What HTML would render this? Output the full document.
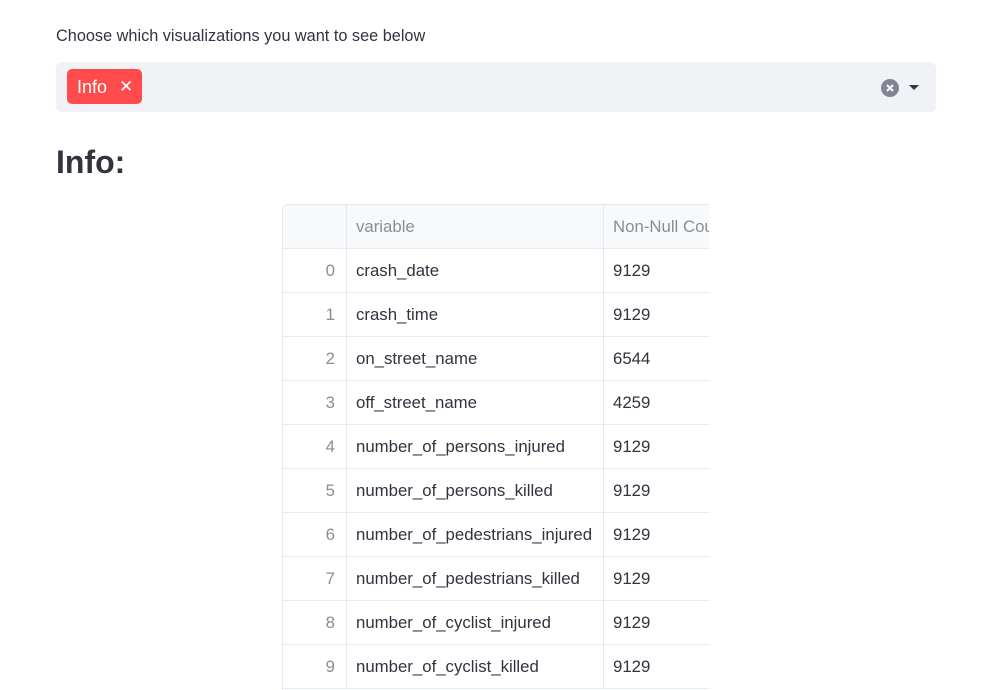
<!DOCTYPE html>
<html><head><style>
html,body{margin:0;padding:0;background:#fff;width:1000px;height:690px;overflow:hidden;font-family:"Liberation Sans",sans-serif;color:#31333f}
.lbl{position:absolute;left:56px;top:27px;font-size:16.3px;color:#31333f}
.sel{position:absolute;left:56px;top:62px;width:880px;height:50px;background:#f0f2f6;border-radius:6px}
.tag{position:absolute;left:11px;top:7px;width:75px;height:35px;background:#ff4b4b;border-radius:5px;color:#fff;font-size:18px;line-height:36px}
.tag span{position:absolute;left:10px}
.tag b{position:absolute;left:52px;font-weight:normal;font-size:17px}
.clr{position:absolute;left:825px;top:17px;width:18px;height:18px;border-radius:50%;background:#808495}
.arr{position:absolute;left:853px;top:23px;width:0;height:0;border-left:5px solid transparent;border-right:5px solid transparent;border-top:5px solid #31333f}
h1{position:absolute;left:56px;top:144px;margin:0;font-size:32px;font-weight:bold;color:#31333f}
.tbl{position:absolute;left:282px;top:204px;width:426px;height:485px;border:1px solid #e6e9ef;border-right:none;border-bottom:none;border-radius:6px 0 0 0;overflow:hidden;font-size:16.8px}
.r{position:absolute;left:0;width:426px;height:43px;border-bottom:1px solid #e6e9ef}
.r div{position:absolute;top:0;height:44px;line-height:44px}
.i{left:0;width:52px;text-align:right;color:#8b8d96}
.v{left:63px;border-left:1px solid #e6e9ef;padding-left:9px;width:247px}
.c{left:320px;border-left:1px solid #e6e9ef;padding-left:9px;white-space:nowrap}
.h{background:#f8f9fb;color:#8b8d96}
.h .v,.h .c{color:#8b8d96}
</style></head><body>
<div class="lbl">Choose which visualizations you want to see below</div>
<div class="sel"><div class="tag"><span>Info</span><b>✕</b></div>
<div class="clr"><svg width="18" height="18"><path d="M6 6L12 12M12 6L6 12" stroke="#fff" stroke-width="2"/></svg></div><div class="arr"></div></div>
<h1>Info:</h1>
<div class="tbl">
<div class="r h" style="top:0"><div class="i"></div><div class="v">variable</div><div class="c">Non-Null Cou</div></div>
<div class="r" style="top:44px"><div class="i">0</div><div class="v">crash_date</div><div class="c">9129</div></div>
<div class="r" style="top:88px"><div class="i">1</div><div class="v">crash_time</div><div class="c">9129</div></div>
<div class="r" style="top:132px"><div class="i">2</div><div class="v">on_street_name</div><div class="c">6544</div></div>
<div class="r" style="top:176px"><div class="i">3</div><div class="v">off_street_name</div><div class="c">4259</div></div>
<div class="r" style="top:220px"><div class="i">4</div><div class="v">number_of_persons_injured</div><div class="c">9129</div></div>
<div class="r" style="top:264px"><div class="i">5</div><div class="v">number_of_persons_killed</div><div class="c">9129</div></div>
<div class="r" style="top:308px"><div class="i">6</div><div class="v">number_of_pedestrians_injured</div><div class="c">9129</div></div>
<div class="r" style="top:352px"><div class="i">7</div><div class="v">number_of_pedestrians_killed</div><div class="c">9129</div></div>
<div class="r" style="top:396px"><div class="i">8</div><div class="v">number_of_cyclist_injured</div><div class="c">9129</div></div>
<div class="r" style="top:440px"><div class="i">9</div><div class="v">number_of_cyclist_killed</div><div class="c">9129</div></div>
</div>
</body></html>
